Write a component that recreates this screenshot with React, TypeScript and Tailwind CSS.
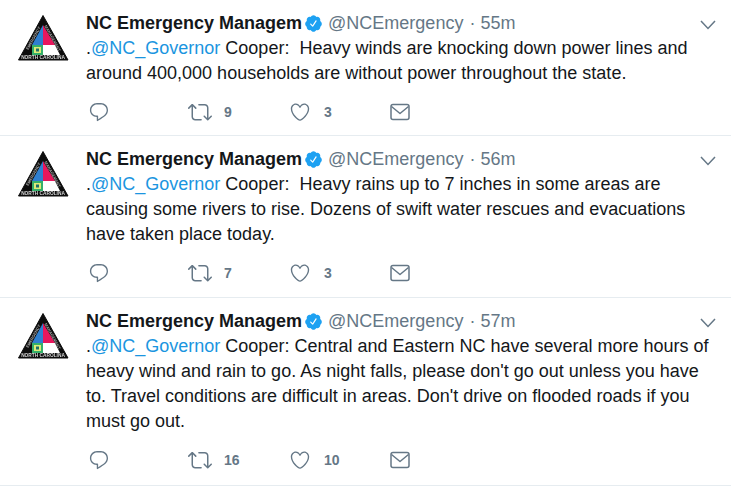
import React from "react";

const Logo = () => (
  <svg width="52" height="48" viewBox="0 0 52 48" className="block blur-[0.4px]">
    <polygon points="26,1.5 51,46 1.5,46" fill="#0d0d0d" stroke="#0d0d0d" strokeWidth="1" strokeLinejoin="round" />
    <polygon points="26,11 26,31 15,31" fill="#2f7fd0" />
    <polygon points="26,11 38,31 26,31" fill="#e8175d" />
    <polygon points="26,31 38,31 43,41 26,41" fill="#ffffff" />
    <rect x="15" y="31" width="11" height="10" fill="#35b06a" />
    <rect x="17" y="33" width="7" height="6" fill="#dcec78" />
    <rect x="19" y="34.5" width="3" height="3" fill="#1d6f6a" />
    <g fill="#a8a8a8" fontSize="4" fontWeight="700" fontFamily="Liberation Sans, sans-serif" textAnchor="middle">
      <text x="17.6" y="24.8" transform="rotate(-61 17.6 24.8)">EMERGENCY</text>
      <text x="34.4" y="24.8" transform="rotate(61 34.4 24.8)">MANAGEMENT</text>
      <text x="26" y="45" fontSize="4.8" fill="#d5d5d5">NORTH CAROLINA</text>
    </g>
  </svg>
);

const Verified = () => (
  <svg viewBox="0 0 24 24" className="w-[19px] h-[19px] fill-[#1da1f2]">
    <path d="M22.5 12.5c0-1.58-.875-2.95-2.148-3.6.154-.435.238-.905.238-1.4 0-2.21-1.71-3.998-3.818-3.998-.47 0-.92.084-1.336.25C14.818 2.415 13.51 1.5 12 1.5s-2.816.917-3.437 2.25c-.415-.165-.866-.25-1.336-.25-2.11 0-3.818 1.79-3.818 4 0 .494.083.964.237 1.4-1.272.65-2.147 2.018-2.147 3.6 0 1.495.782 2.798 1.942 3.486-.02.17-.032.34-.032.514 0 2.21 1.708 4 3.818 4 .47 0 .92-.086 1.335-.25.62 1.334 1.926 2.25 3.437 2.25 1.512 0 2.818-.916 3.437-2.25.415.163.865.248 1.336.248 2.11 0 3.818-1.79 3.818-4 0-.174-.012-.344-.033-.513 1.158-.687 1.943-1.99 1.943-3.484zm-6.616-3.334l-4.334 6.5c-.145.217-.382.334-.625.334-.143 0-.288-.04-.416-.126l-.115-.094-2.415-2.415c-.293-.293-.293-.768 0-1.06s.768-.294 1.06 0l1.77 1.767 3.825-5.74c.23-.345.696-.436 1.04-.207.346.23.44.696.21 1.04z" />
  </svg>
);

const Reply = () => (
  <svg viewBox="0 0 24 24" className="w-[22px] h-[22px] fill-[#657786]">
    <path d="M14.046 2.242l-4.148-.01h-.002c-4.374 0-7.8 3.427-7.8 7.802 0 4.098 3.186 7.206 7.465 7.37v3.828c0 .108.044.286.12.403.142.225.384.347.632.347.138 0 .277-.038.402-.118.264-.168 6.473-4.14 8.088-5.506 1.902-1.61 3.04-3.97 3.043-6.312v-.017c-.006-4.367-3.43-7.787-7.8-7.788zm3.787 12.972c-1.134.96-4.862 3.405-6.772 4.643V16.67c0-.414-.335-.75-.75-.75h-.396c-3.66 0-6.318-2.476-6.318-5.886 0-3.534 2.768-6.302 6.3-6.302l4.147.01h.002c3.532 0 6.3 2.766 6.302 6.296-.003 1.91-.942 3.844-2.514 5.176z" />
  </svg>
);

const Retweet = () => (
  <svg viewBox="0 0 24 24" className="w-[24px] h-[24px] fill-[#657786]">
    <path d="M23.77 15.67c-.292-.293-.767-.293-1.06 0l-2.22 2.22V7.65c0-2.068-1.683-3.75-3.75-3.75h-5.85c-.414 0-.75.336-.75.75s.336.75.75.75h5.85c1.24 0 2.25 1.01 2.25 2.25v10.24l-2.22-2.22c-.293-.293-.768-.293-1.06 0s-.294.768 0 1.06l3.5 3.5c.145.147.337.22.53.22s.383-.072.53-.22l3.5-3.5c.294-.292.294-.767 0-1.06zm-10.66 3.28H7.26c-1.24 0-2.25-1.01-2.25-2.25V6.46l2.22 2.22c.148.147.34.22.532.22s.384-.073.53-.22c.293-.293.293-.768 0-1.06l-3.5-3.5c-.293-.294-.768-.294-1.06 0l-3.5 3.5c-.294.292-.294.767 0 1.06s.767.293 1.06 0l2.22-2.22V16.7c0 2.068 1.683 3.75 3.75 3.75h5.85c.414 0 .75-.336.75-.75s-.337-.75-.75-.75z" />
  </svg>
);

const Heart = () => (
  <svg viewBox="0 0 24 24" className="w-[22px] h-[22px] fill-[#657786]">
    <path d="M12 21.638h-.014C9.403 21.59 1.95 14.856 1.95 8.478c0-3.064 2.525-5.754 5.403-5.754 2.29 0 3.83 1.58 4.646 2.73.814-1.148 2.354-2.73 4.645-2.73 2.88 0 5.404 2.69 5.404 5.755 0 6.376-7.454 13.11-10.037 13.157H12zM7.354 4.225c-2.08 0-3.903 1.988-3.903 4.255 0 5.74 7.034 11.596 8.55 11.658 1.518-.062 8.55-5.917 8.55-11.658 0-2.267-1.823-4.255-3.903-4.255-2.528 0-3.94 2.936-3.952 2.965-.23.562-1.156.562-1.387 0-.014-.03-1.425-2.965-3.954-2.965z" />
  </svg>
);

const Mail = () => (
  <svg viewBox="0 0 20 18" className="w-[20px] h-[18px] fill-none stroke-[#657786]" strokeWidth="1.5">
    <rect x="1" y="1.5" width="18" height="15" rx="2" />
    <path d="M1.5 3.5 L10 10.5 L18.5 3.5" strokeLinejoin="round" />
  </svg>
);

const Tweet = ({ time, lines, retweets, likes, pad }: any) => (
  <div className={`flex border-b border-[#e6ecf0] pt-[11px] ${pad}`}>
    <div className="w-[86px] shrink-0 pl-[17px] pt-[3px]">
      <Logo />
    </div>
    <div className="flex-1 min-w-0 pr-[15px]">
      <div className="relative flex items-center h-[25px] leading-[25px]">
        <span className="font-bold text-[#14171a]">NC Emergency Managem</span>
        <span className="ml-[2px] mr-[5px]"><Verified /></span>
        <span className="text-[#657786]">@NCEmergency</span>
        <span className="text-[#657786] ml-[6px]">· {time}</span>
        <svg viewBox="0 0 16 10" className="absolute right-0 top-[9px] w-[16px] h-[10px] fill-none stroke-[#657786]" strokeWidth="1.5">
          <path d="M1 1 L8 8.5 L15 1" />
        </svg>
      </div>
      <div className="text-[#14171a] leading-[25px] whitespace-pre-wrap">
        {lines.map((l: string, i: number) => (
          <div key={i}>
            {i === 0 && (
              <>
                .<span className="text-[#1b95e0]">@NC_Governor</span>
              </>
            )}
            {l}
          </div>
        ))}
      </div>
      <div className="flex items-center h-[24px] mt-[14px] text-[#657786] text-[14px] font-bold">
        <div className="w-[102px] pl-[2px] flex items-center"><Reply /></div>
        <div className="w-[101px] flex items-center">
          <Retweet />
          <span className="ml-[12px]">{retweets}</span>
        </div>
        <div className="w-[101px] flex items-center">
          <Heart />
          <span className="ml-[13px]">{likes}</span>
        </div>
        <div className="flex items-center"><Mail /></div>
      </div>
    </div>
  </div>
);

const App = () => {
  return (
    <div className="w-[731px] h-[487px] overflow-hidden bg-white text-[18px] font-['Liberation_Sans',Arial,sans-serif]">
      <Tweet
        time="55m"
        pad="h-[136px]"
        retweets="9"
        likes="3"
        lines={[
          " Cooper:  Heavy winds are knocking down power lines and",
          "around 400,000 households are without power throughout the state.",
        ]}
      />
      <Tweet
        time="56m"
        pad="h-[162px]"
        retweets="7"
        likes="3"
        lines={[
          " Cooper:  Heavy rains up to 7 inches in some areas are",
          "causing some rivers to rise. Dozens of swift water rescues and evacuations",
          "have taken place today.",
        ]}
      />
      <Tweet
        time="57m"
        pad="h-[188px]"
        retweets="16"
        likes="10"
        lines={[
          " Cooper: Central and Eastern NC have several more hours of",
          "heavy wind and rain to go. As night falls, please don't go out unless you have",
          "to. Travel conditions are difficult in areas. Don't drive on flooded roads if you",
          "must go out.",
        ]}
      />
    </div>
  );
};

export default App;
